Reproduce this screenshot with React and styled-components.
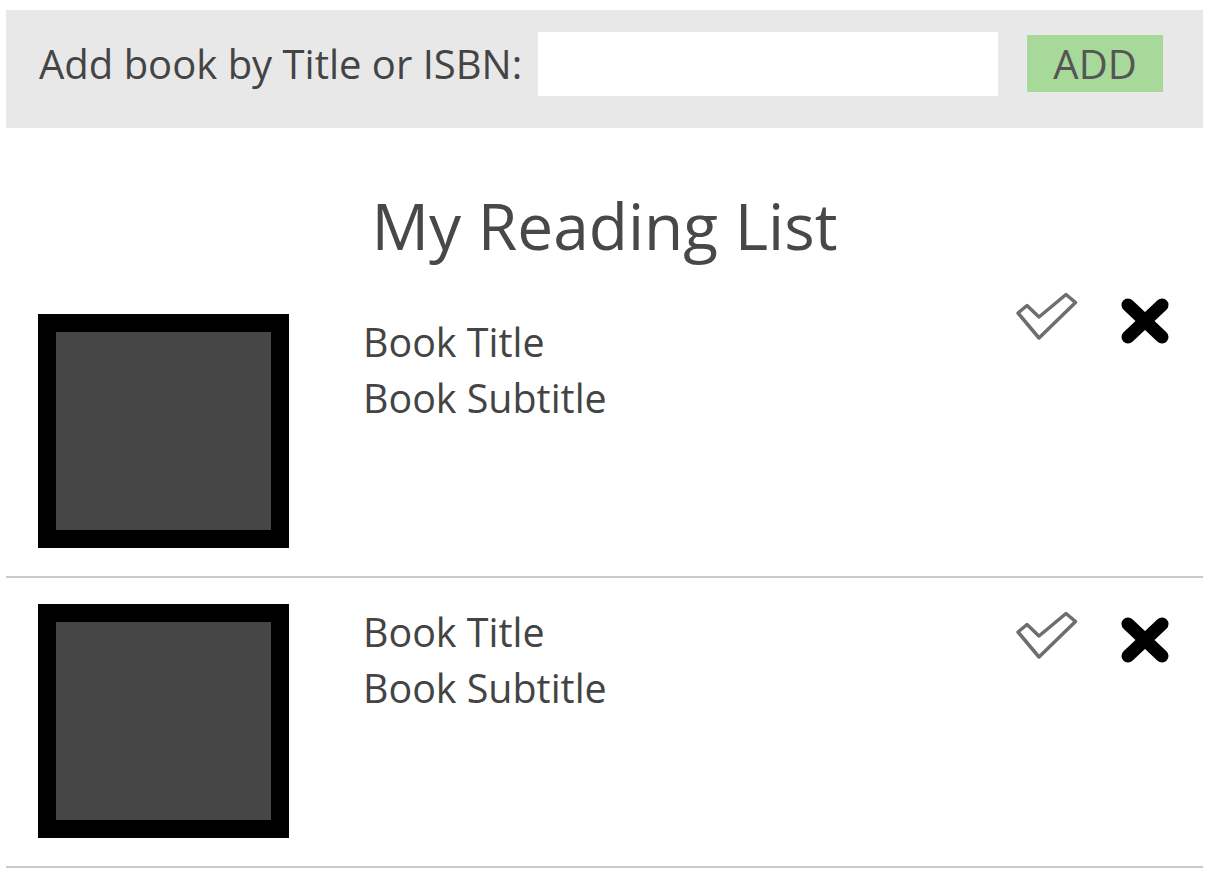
import React from "react";
import styled, { createGlobalStyle } from "styled-components";

const GlobalStyle = createGlobalStyle`
  body {
    margin: 0;
    background: #ffffff;
    font-family: "Open Sans", "Noto Sans", sans-serif;
  }
`;

const Page = styled.div`
  padding: 10px 11px 0 6px;
`;

const AddBar = styled.div`
  display: flex;
  align-items: center;
  height: 118px;
  box-sizing: border-box;
  padding: 0 40px 11px 33px;
  background: #e8e8e8;
`;

const Label = styled.label`
  font-size: 40px;
  color: #444444;
  white-space: nowrap;
`;

const SearchInput = styled.input`
  width: 460px;
  height: 64px;
  margin-left: 16px;
  border: 0;
  padding: 0 12px;
  box-sizing: border-box;
  background: #ffffff;
  font-family: inherit;
  font-size: 30px;
  outline: none;
`;

const AddButton = styled.button`
  width: 136px;
  height: 57px;
  margin-left: 29px;
  border: 0;
  padding: 0;
  background: #a6d99a;
  color: #555555;
  font-family: inherit;
  font-size: 40px;
  line-height: 57px;
  cursor: pointer;
`;

const Heading = styled.h1`
  margin: 57px 0 0;
  text-align: center;
  font-size: 64px;
  font-weight: 400;
  line-height: 82px;
  color: #484848;
`;

const List = styled.ul`
  list-style: none;
  margin: 0;
  padding: 0;
`;

const Item = styled.li`
  display: flex;
  align-items: flex-start;
  padding: 0 33px 28px 32px;
  border-bottom: 2px solid #cacaca;
`;

const Cover = styled.div`
  display: flex;
  align-items: flex-start;
  flex: 1;
  margin-top: ${(props) => props.$top}px;
`;

const Thumb = styled.div`
  width: 251px;
  height: 234px;
  box-sizing: border-box;
  border: 18px solid #000000;
  background: #464646;
  flex-shrink: 0;
`;

const Info = styled.div`
  margin-left: 74px;
  font-size: 39.4px;
  line-height: 56px;
  color: #444444;
`;

const Actions = styled.div`
  display: flex;
  align-items: flex-start;
  gap: 42px;
  margin-top: ${(props) => props.$top}px;
`;

const IconButton = styled.button`
  display: flex;
  border: 0;
  padding: 0;
  background: none;
  cursor: pointer;
  margin-top: ${(props) => props.$shift || 0}px;
`;

function CheckIcon() {
  return (
    <svg width="62" height="50" viewBox="0 0 62 50">
      <polygon
        points="2,21 11,13.5 23,25 50,2.5 59.5,10.5 23,46"
        fill="#ffffff"
        stroke="#6e6e6e"
        strokeWidth="3.5"
        strokeLinejoin="round"
      />
    </svg>
  );
}

function CloseIcon() {
  return (
    <svg width="50" height="48" viewBox="0 0 50 48">
      <g stroke="#000000" strokeWidth="13" strokeLinecap="round">
        <line x1="8" y1="8" x2="42" y2="40" />
        <line x1="42" y1="8" x2="8" y2="40" />
      </g>
    </svg>
  );
}

const books = [
  { id: 1, title: "Book Title", subtitle: "Book Subtitle", coverTop: 47, actionsTop: 25 },
  { id: 2, title: "Book Title", subtitle: "Book Subtitle", coverTop: 26, actionsTop: 33 },
];

export default function App() {
  return (
    <>
      <GlobalStyle />
      <Page>
        <AddBar>
          <Label htmlFor="book-search">Add book by Title or ISBN:</Label>
          <SearchInput id="book-search" type="text" />
          <AddButton>ADD</AddButton>
        </AddBar>
        <Heading>My Reading List</Heading>
        <List>
          {books.map((book) => (
            <Item key={book.id}>
              <Cover $top={book.coverTop}>
                <Thumb />
                <Info>
                  <div>{book.title}</div>
                  <div>{book.subtitle}</div>
                </Info>
              </Cover>
              <Actions $top={book.actionsTop}>
                <IconButton aria-label="Mark as read">
                  <CheckIcon />
                </IconButton>
                <IconButton aria-label="Remove" $shift={5}>
                  <CloseIcon />
                </IconButton>
              </Actions>
            </Item>
          ))}
        </List>
      </Page>
    </>
  );
}
